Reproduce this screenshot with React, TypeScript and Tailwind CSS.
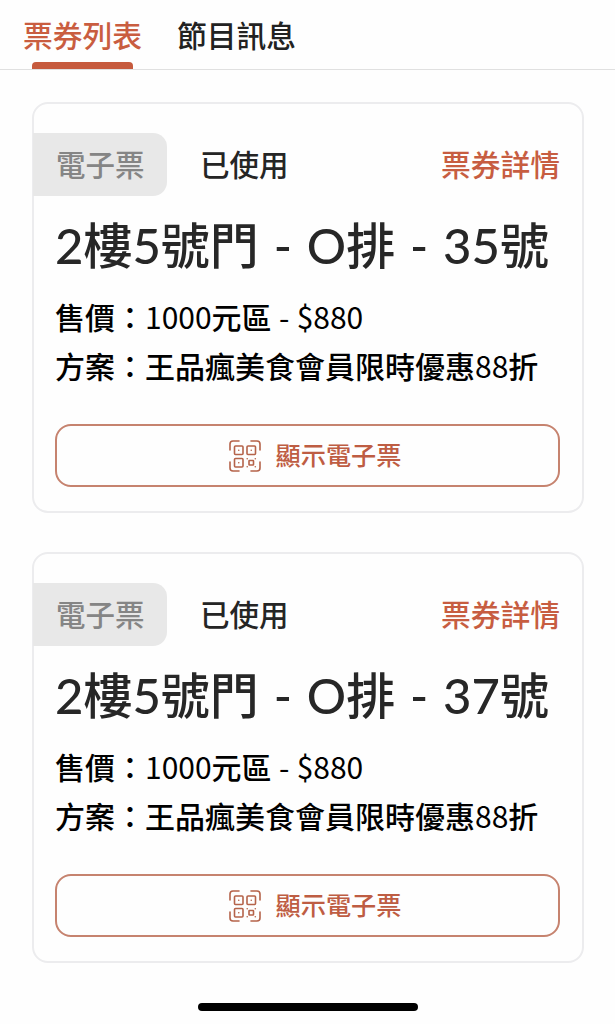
interface Ticket {
  seat: string;
  price: string;
  plan: string;
}

const tickets: Ticket[] = [
  { seat: "2樓5號門 - O排 - 35號", price: "1000元區 - $880", plan: "王品瘋美食會員限時優惠88折" },
  { seat: "2樓5號門 - O排 - 37號", price: "1000元區 - $880", plan: "王品瘋美食會員限時優惠88折" },
];

// Digits are set one weight lighter than the Chinese text around them
function MixedText({ text }: { text: string }) {
  return text.split(/([ -~]+)/).map((part, i) =>
    i % 2 === 1 ? (
      <span key={i} className="font-normal [word-spacing:0.6px]">{part}</span>
    ) : (
      part
    )
  );
}

function QrIcon() {
  return (
    <svg className="h-8 w-8 shrink-0" viewBox="0 0 32 32" fill="none" stroke="#b5634a" strokeWidth={1.6} strokeLinecap="round">
      {/* Scan frame */}
      <path d="M1 10V4a3 3 0 0 1 3-3h6M22 1h6a3 3 0 0 1 3 3v6M31 22v6a3 3 0 0 1-3 3h-6M10 31H4a3 3 0 0 1-3-3v-6" />
      {/* Code blocks */}
      <rect x="5.5" y="6" width="8.5" height="8.5" rx="1" />
      <rect x="18" y="6" width="8.5" height="8.5" rx="1" />
      <rect x="5.5" y="18.5" width="8.5" height="8.5" rx="1" />
      <rect x="20" y="20.5" width="4.5" height="4.5" rx="0.5" />
      <path d="M9.75 10.25h.01M22.25 10.25h.01M9.75 22.75h.01M18.2 18.7h.01M26.3 18.7h.01M18.2 26.8h.01M26.3 26.8h.01" />
    </svg>
  );
}

function TicketCard({ seat, price, plan }: Ticket) {
  return (
    <div className="h-[411px] rounded-2xl border-2 border-[#ececee] pt-[30px]">
      <div className="-mt-px flex h-[63px] items-center text-[29.5px] leading-none font-medium">
        <div className="-ml-px flex h-full w-[134px] items-center rounded-r-[14px] bg-[#e8e8e8] pb-[2px] pl-[23px] text-[#858585]">
          <span>電子票</span>
        </div>
        <span className="ml-[33px] pb-[2px] text-[#252525]">已使用</span>
        <button className="mr-[22px] ml-auto pb-[2px] text-[29.75px] text-[#c75d41]">票券詳情</button>
      </div>

      <h2 className="mt-[17px] pl-[21px] font-['Lato','Noto_Sans_CJK_TC',sans-serif] text-[49px] leading-[64px] font-medium [word-spacing:2.5px] whitespace-nowrap text-[#272727]">
        {seat}
      </h2>

      <div className="mt-[15px] pl-[21px] text-[30px] leading-[49px] font-medium whitespace-nowrap text-black">
        <p>售價：<MixedText text={price} /></p>
        <p>方案：<MixedText text={plan} /></p>
      </div>

      <button className="mx-[21px] mt-[34px] flex h-[63px] w-[505px] items-center justify-center gap-[15px] rounded-2xl border-2 border-[#c6836f] pl-[15px] text-[25.2px] leading-none font-medium text-[#be5d43]">
        <QrIcon />
        <span className="pb-[2px]">顯示電子票</span>
      </button>
    </div>
  );
}

export default function App() {
  return (
    <div className="flex h-[1024px] w-[615px] flex-col overflow-hidden bg-[#fefefe] font-['Noto_Sans_CJK_TC',sans-serif]">
      <nav className="flex h-[70px] shrink-0 gap-[35px] border-b border-[#e0e0e0] pl-[23px] text-[29.75px] font-medium">
        <button className="flex h-full flex-col items-center justify-between pt-[11px] text-[#c95d40]">
          <span className="leading-[46px]">票券列表</span>
          <span className="mr-[1px] h-[7px] w-[101px] shrink-0 rounded-t-[4px] bg-[#c65a3d]" />
        </button>
        <button className="flex h-full pt-[11px] text-[#222]">
          <span className="leading-[46px]">節目訊息</span>
        </button>
      </nav>

      <main className="flex flex-col gap-[39px] pt-8 pr-[31px] pl-8">
        {tickets.map((ticket) => (
          <TicketCard key={ticket.seat} {...ticket} />
        ))}
      </main>

      {/* Home indicator */}
      <div className="mt-auto mb-[13px] ml-[198px] h-2 w-[220px] rounded-full bg-black" />
    </div>
  );
}
